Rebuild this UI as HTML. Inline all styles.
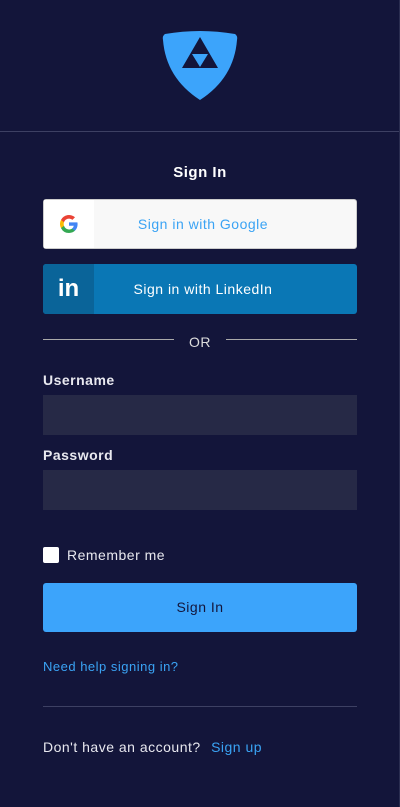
<!DOCTYPE html>
<html><head><meta charset="utf-8"><style>
*{box-sizing:border-box;margin:0;padding:0}
body{width:400px;height:807px;background:#13153a;font-family:"Liberation Sans",sans-serif;position:relative;overflow:hidden;color:#fff;letter-spacing:0.5px}
.hr{position:absolute;left:0;width:400px;height:1px;background:#3d4063;top:131px}
.t{position:absolute;width:100%;text-align:center;font-weight:bold;font-size:15px;top:164px}
.btn{position:absolute;left:43px;width:314px;height:50px;border-radius:3px;font-size:14px}
.g{top:199px;background:#f8f8f8;border:1px solid #ccc;color:#3aa3f4}
.g .ic{position:absolute;left:0;top:0;width:50px;height:48px;background:#fff}
.l{top:264px;background:#0a77b5;color:#fff}
.l .ic{position:absolute;left:0;top:0;width:51px;height:50px;background:#0a6499;border-radius:3px 0 0 3px;font-weight:bold;font-size:24px;text-align:center;line-height:50px;letter-spacing:0}
.lab{position:absolute;left:0;right:0;text-align:center;line-height:48px;padding-left:6px}
.or{position:absolute;top:334px;width:100%;text-align:center;font-size:14px;color:#ddd}
.ln{position:absolute;top:339px;height:1px;background:#aaa;width:131px}
.fl{position:absolute;left:43px;font-weight:bold;font-size:14px;color:#e8e8ef}
.in{position:absolute;left:43px;width:314px;height:40px;background:#262946}
.cb{position:absolute;left:43px;top:547px;width:16px;height:16px;background:#fff;border-radius:2px}
.sb{position:absolute;left:43px;top:583px;width:314px;height:49px;background:#3ca4fb;border-radius:3px;text-align:center;line-height:49px;font-size:14px;color:#13153a}
a{color:#3aa3f4;text-decoration:none}
</style></head><body>
<svg style="position:absolute;left:160px;top:28px" width="80" height="76" viewBox="160 28 80 76">
<path d="M165 34 Q200 28 235 34 Q238 36 237 40 Q234 78 200 100 Q166 78 163 40 Q162 36 165 34Z" fill="#3ca4fb"/>
<path d="M200 37 L218 68 L182 68Z" fill="#13153a"/>
<path d="M192 54 L208 54 L200 67Z" fill="#3ca4fb"/>
</svg>
<div class="hr"></div>
<div class="t">Sign In</div>
<div class="btn g"><div class="ic"><svg style="position:absolute;left:16px;top:15px" width="18" height="18" viewBox="0 0 18 18"><path d="M17.6 9.2c0-.6-.1-1.2-.2-1.8H9v3.4h4.8a4.1 4.1 0 0 1-1.8 2.7v2.2h2.9c1.7-1.6 2.7-3.9 2.7-6.5z" fill="#4285F4"/><path d="M9 18c2.4 0 4.5-.8 5.9-2.2l-2.9-2.2c-.8.5-1.8.9-3 .9-2.3 0-4.3-1.6-5-3.7H1v2.3A9 9 0 0 0 9 18z" fill="#34A853"/><path d="M4 10.8a5.4 5.4 0 0 1 0-3.6V4.9H1a9 9 0 0 0 0 8.2z" fill="#FBBC05"/><path d="M9 3.6c1.3 0 2.5.5 3.4 1.3l2.6-2.6A9 9 0 0 0 1 4.9l3 2.3c.7-2.1 2.7-3.6 5-3.6z" fill="#EA4335"/></svg></div><div class="lab">Sign in with Google</div></div>
<div class="btn l"><div class="ic">in</div><div class="lab" style="line-height:50px">Sign in with LinkedIn</div></div>
<div class="ln" style="left:43px"></div><div class="ln" style="left:226px"></div>
<div class="or">OR</div>
<div class="fl" style="top:372px">Username</div>
<div class="in" style="top:395px"></div>
<div class="fl" style="top:447px">Password</div>
<div class="in" style="top:470px"></div>
<div class="cb"></div>
<div style="position:absolute;left:67px;top:547px;font-size:14px;color:#e8e8ef">Remember me</div>
<div class="sb">Sign In</div>
<div style="position:absolute;left:43px;top:659px;font-size:13px"><a>Need help signing in?</a></div>
<div style="position:absolute;left:43px;top:706px;width:314px;height:1px;background:#3d4063"></div>
<div style="position:absolute;left:43px;top:739px;font-size:14px;color:#e8e8ef">Don't have an account? <a style="margin-left:6px">Sign up</a></div>
<div style="position:absolute;left:399px;top:0;width:1px;height:807px;background:#2a2d50"></div>
</body></html>
